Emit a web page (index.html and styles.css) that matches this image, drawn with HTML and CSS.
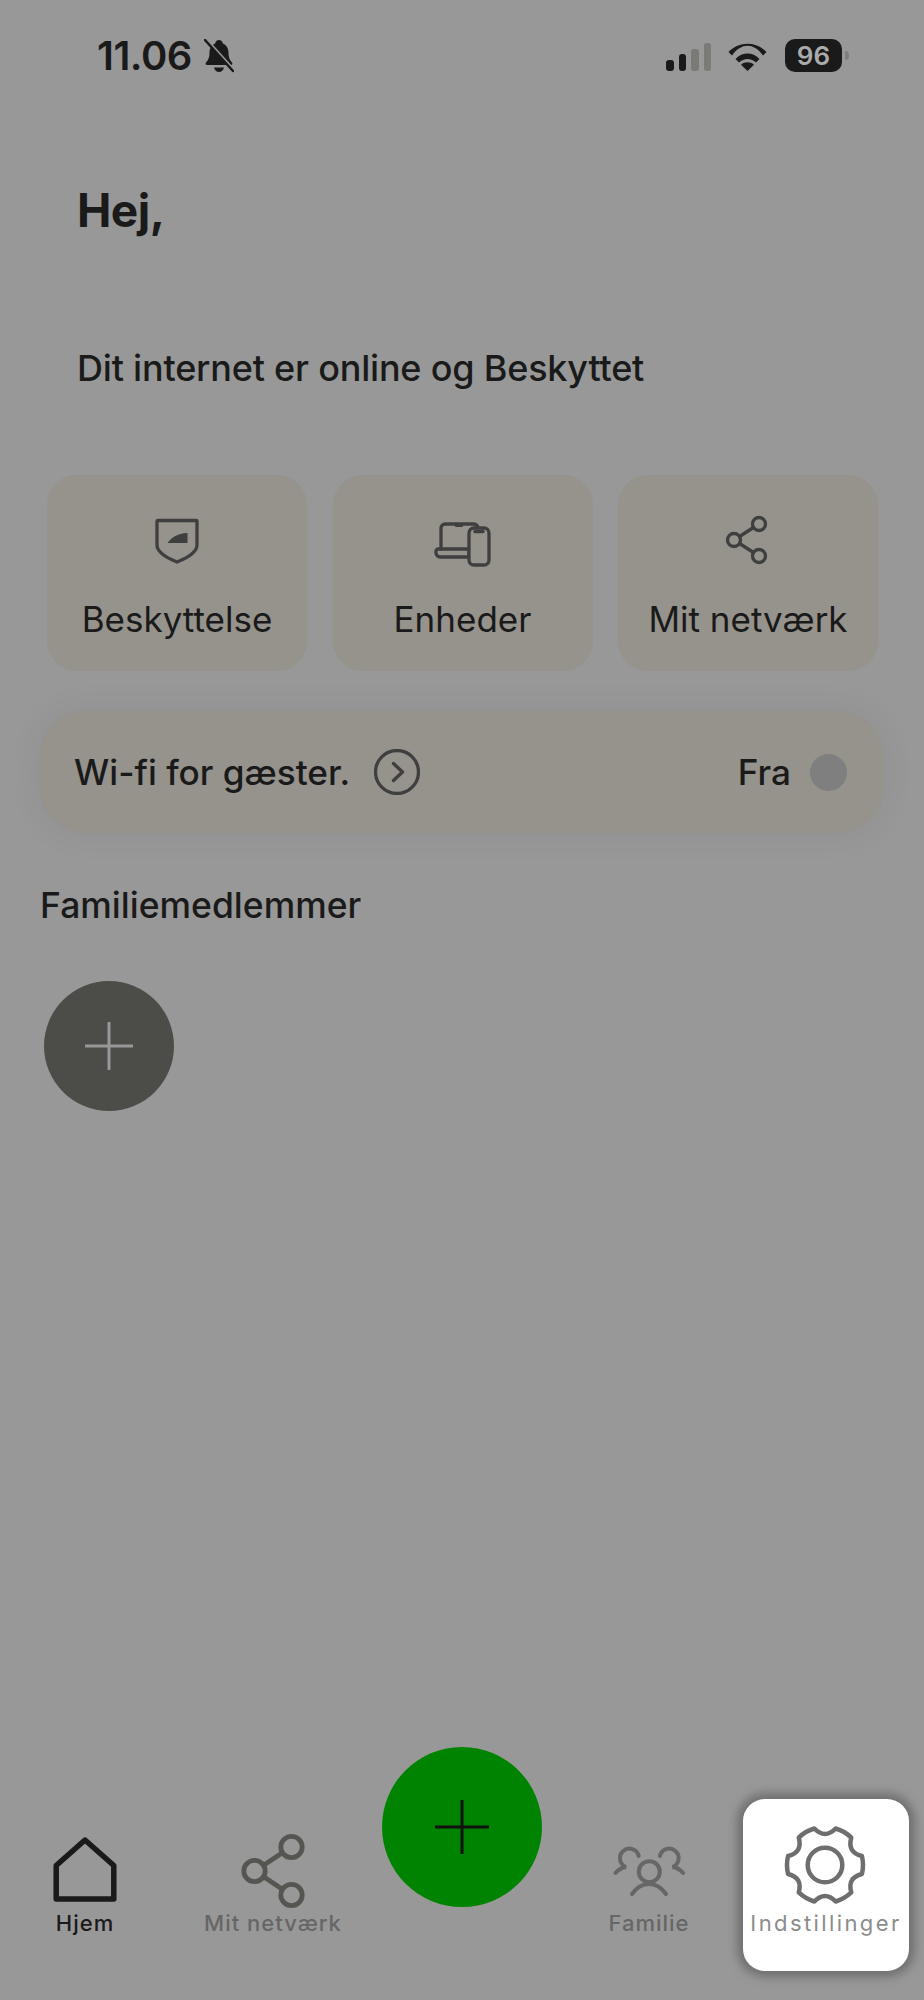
FILE: index.html
```html
<!DOCTYPE html>
<html lang="da">
<head>
<meta charset="utf-8">
<title>Hjem</title>
<link rel="stylesheet" href="styles.css">
</head>
<body>
<div class="page">
  <header class="status">
    <div class="status-left">
      <span class="time">11.06</span>
      <svg class="bell" width="30" height="34" viewBox="0 0 30 34"><path d="M15 1c2 0 3.500 1.500 3.800 3.500 4 1.500 5.700 5 5.700 9.500 0 4 1 7 3.500 9.500.8 1 .3 2.500-1 2.500H3c-1.300 0-1.800-1.500-1-2.500C4.500 21 5.500 18 5.500 14c0-4.500 1.700-8 5.700-9.500C11.500 2.500 13 1 15 1z" class="fill-dark"/><path d="M10 28.500h10c-.5 2.700-2.500 4.500-5 4.500s-4.500-1.800-5-4.500z" class="fill-dark"/><path d="M3 1l28 31" class="bell-gap"/><path d="M1 1l28 31" class="bell-slash"/></svg>
    </div>
    <div class="status-right">
      <div class="signal"><i class="bar b1"></i><i class="bar b2"></i><i class="bar b3 off"></i><i class="bar b4 off"></i></div>
      <svg class="wifi" width="39" height="28" viewBox="0 0 39 28"><path d="M.5 9C11-2 28-2 38.500 9l-3.500 3.600C26-.5 13-.5 4 12.600z" class="fill-dark"/><path d="M7.500 16c7-7.200 17-7.200 24 0l-3.500 3.600c-5-4.700-12-4.700-17 0z" class="fill-dark"/><path d="M19.500 28l-6.500-6.300c3.700-3.200 9.300-3.200 13 0z" class="fill-dark"/></svg>
      <div class="battery"><span class="battery-body">96</span><i class="battery-nub"></i></div>
    </div>
  </header>

  <h1 class="greeting">Hej,</h1>
  <p class="online">Dit internet er online og Beskyttet</p>

  <section class="cards">
    <div class="card">
      <svg class="card-icon" width="60" height="60" viewBox="0 0 60 60"><path d="M10 10.500c0-.6.400-1 1-1h38c.6 0 1 .4 1 1V34c0 6-7.500 12-20 17C17.500 46 10 40 10 34z" class="line"/><path d="M20.500 32c3-5 10-9.500 20-10V32z" class="fill-icon"/></svg>
      <span class="card-label">Beskyttelse</span>
    </div>
    <div class="card">
      <svg class="card-icon" width="60" height="60" viewBox="0 0 60 60"><path d="M8 38V17c0-2 2-4 4-4h29c2 0 4 2 4 4" class="line"/><path d="M21 13h10l-1.500 3h-7z" class="fill-icon"/><path d="M3 40c0-1 1-2 2-2h31v8H7c-2 0-4-2-4-4z" class="line"/><rect x="36" y="17" width="20" height="37" rx="5" class="card-phone"/><path d="M42 20.500h8" class="line"/></svg>
      <span class="card-label">Enheder</span>
    </div>
    <div class="card">
      <svg class="card-icon" width="60" height="60" viewBox="0 0 60 60"><circle cx="41" cy="13" r="6.500" class="line"/><circle cx="16" cy="29" r="6.500" class="line"/><circle cx="41" cy="45" r="6.500" class="line"/><path d="M21.500 25.500l14-9M21.500 32.500l14 9" class="line"/></svg>
      <span class="card-label">Mit netværk</span>
    </div>
  </section>

  <section class="guest">
    <div class="guest-left">
      <span class="guest-label">Wi-fi for gæster.</span>
      <svg width="46" height="46" viewBox="0 0 46 46"><circle cx="23" cy="23" r="21.500" class="line"/><path d="M19.500 14.500l9 8.500-9 8.500" class="line"/></svg>
    </div>
    <div class="guest-right">
      <span class="guest-label">Fra</span>
      <i class="toggle"></i>
    </div>
  </section>

  <h2 class="family-title">Familiemedlemmer</h2>
  <div class="family-add">
    <svg width="48" height="48" viewBox="0 0 48 48"><path d="M24 1v46M1 24h46" class="add-plus"/></svg>
  </div>

  <nav class="nav">
    <div class="nav-item home">
      <svg class="nav-icon" width="90" height="90" viewBox="0 0 90 90"><path d="M45 20L73.800 45.500V79H16.200V45.500z" class="home-line"/></svg>
      <span class="nav-label active">Hjem</span>
    </div>
    <div class="nav-item share">
      <svg class="nav-icon" width="90" height="90" viewBox="0 0 90 90"><circle cx="63.500" cy="27" r="10.700" class="share-line"/><circle cx="26.500" cy="51" r="10.700" class="share-line"/><circle cx="63.500" cy="75" r="10.700" class="share-line"/><path d="M36 45l18-12M36 57l18 12" class="share-line"/></svg>
      <span class="nav-label">Mit netværk</span>
    </div>
    <div class="fab">
      <svg width="56" height="56" viewBox="0 0 56 56"><path d="M28 1v54M1 28h54" class="fab-plus"/></svg>
    </div>
    <div class="nav-item family">
      <svg class="nav-icon" width="90" height="90" viewBox="0 0 90 90"><circle cx="45.300" cy="51.700" r="10.500" class="family-line"/><path d="M28 74c5-7 11-10 17-10s12 3 17 10" class="family-line"/><path d="M34.700 36A9.500 9.500 0 1 0 22 47c-4 .5-7.500 2.500-10.500 6" class="family-line"/><path d="M55.900 36A9.500 9.500 0 1 1 68.600 47c4 .5 7.500 2.500 10.500 6" class="family-line"/></svg>
      <span class="nav-label">Familie</span>
    </div>
    <div class="nav-item settings">
      <svg class="nav-icon" width="90" height="90" viewBox="0 0 90 90"><path d="M80.900 36A38 38 0 0 1 80.900 54Q66.100 57.750 70.260 72.470A38 38 0 0 1 54.670 81.470Q44 70.500 33.330 81.470A38 38 0 0 1 17.740 72.470Q21.900 57.750 7.080 54A38 38 0 0 1 7.080 36Q21.900 32.250 17.740 17.530A38 38 0 0 1 33.330 8.530Q44 19.500 54.670 8.530A38 38 0 0 1 70.260 17.530Q66.100 32.250 80.900 36Z" class="gear-line"/><circle cx="44" cy="45" r="17.300" class="gear-line"/></svg>
      <span class="nav-label">Indstillinger</span>
    </div>
  </nav>
</div>
</body>
</html>
```

FILE: styles.css
```css
* { box-sizing: border-box; }
html, body { margin: 0; padding: 0; }
body { background: #989898; font-family: Inter, "Liberation Sans", sans-serif; color: #1a1a1a; }
.page { width: 924px; height: 2000px; display: flex; flex-direction: column; overflow: hidden; }

.status { display: flex; justify-content: space-between; align-items: center; height: 33px; margin-top: 39px; padding: 0 75px 0 97px; }
.status-left { display: flex; align-items: center; gap: 12px; }
.time { font-size: 40px; font-weight: 600; line-height: 33px; letter-spacing: -0.5px; }
.status-right { display: flex; align-items: center; }
.signal { display: flex; align-items: flex-end; gap: 5px; height: 28px; margin-top: 3px; }
.bar { display: block; width: 7.500px; background: #1a1a1a; border-radius: 3px; }
.bar.off { background: #7a7a76; }
.b1 { height: 11px; }
.b2 { height: 17px; }
.b3 { height: 22px; }
.b4 { height: 28px; }
.wifi { margin: 3px 18px 0 17px; }
.battery { display: flex; align-items: center; gap: 3px; }
.battery-body { display: flex; align-items: center; justify-content: center; width: 57px; height: 33px; background: #1a1a1a; border-radius: 10px; color: #ababab; font-size: 26px; font-weight: 600; line-height: 1; }
.battery-nub { display: block; width: 4px; height: 9px; background: #7f7f7f; border-radius: 0 4px 4px 0; }

.fill-dark { fill: #1a1a1a; }
.bell-gap { fill: none; stroke: #989898; stroke-width: 2.500; }
.bell-slash { fill: none; stroke: #1a1a1a; stroke-width: 2.500; stroke-linecap: round; }

.greeting { margin: 114px 0 0 77px; font-size: 46px; font-weight: 700; line-height: 48px; letter-spacing: -0.5px; }
.online { margin: 114px 0 0 77px; font-size: 36px; font-weight: 500; line-height: 40px; letter-spacing: -0.2px; }

.cards { display: grid; grid-template-columns: repeat(3, 260px); column-gap: 25.500px; margin: 87px 0 0 47px; }
.card { height: 196px; border-radius: 30px; background: #96928c; display: flex; flex-direction: column; align-items: center; padding-top: 36px; }
.card-icon { display: block; }
.card-label { margin-top: 26px; font-size: 35px; line-height: 44px; }
.line { fill: none; stroke: #3f3f3f; stroke-width: 3.300; stroke-linecap: round; stroke-linejoin: round; }
.fill-icon { fill: #3f3f3f; }
.card-phone { fill: #96928c; stroke: #3f3f3f; stroke-width: 3.300; }

.guest { display: flex; justify-content: space-between; align-items: center; width: 843px; height: 122px; margin: 40px 0 0 40px; padding: 0 36px 0 34px; border-radius: 44px; background: #96928c; box-shadow: 0 0 36px rgba(0, 0, 0, .06); }
.guest-left { display: flex; align-items: center; gap: 24px; }
.guest-right { display: flex; align-items: center; gap: 19px; }
.guest-label { font-size: 35.200px; font-weight: 500; line-height: 44px; }
.toggle { display: block; width: 37px; height: 37px; border-radius: 50%; background: #7f7f7f; }

.family-title { margin: 53px 0 0 40px; font-size: 35.500px; font-weight: 500; line-height: 40px; }
.family-add { display: flex; align-items: center; justify-content: center; width: 130px; height: 130px; margin: 55px 0 0 44px; border-radius: 50%; background: #4c4d48; }
.add-plus { fill: none; stroke: #989898; stroke-width: 3; stroke-linecap: round; }

.nav { display: flex; align-items: flex-end; margin-top: auto; margin-bottom: 29px; }
.nav-item { display: flex; flex-direction: column; align-items: center; height: 172px; padding-top: 21px; }
.nav-icon { display: block; }
.nav-label { font-size: 22px; font-weight: 500; line-height: 26px; letter-spacing: 1px; color: #666; white-space: nowrap; }
.nav-label.active { color: #1a1a1a; }
.home { width: 170px; }
.share { width: 166px; margin-left: 20px; }
.fab { display: flex; align-items: center; justify-content: center; flex: none; width: 160px; height: 160px; margin: 0 0 64px 26px; border-radius: 50%; background: #008300; }
.fab-plus { fill: none; stroke: #111; stroke-width: 3; }
.family { width: 166px; margin-left: 24px; }
.settings { width: 166px; margin-left: 11px; background: #fff; border-radius: 22px; box-shadow: 0 0 10px 6px #707070; }
.settings .nav-label { color: #8c8c8c; letter-spacing: 2.400px; font-weight: 400; }
.home-line { fill: none; stroke: #1a1a1a; stroke-width: 5.500; stroke-linejoin: round; }
.share-line { fill: none; stroke: #555551; stroke-width: 4.800; }
.family-line { fill: none; stroke: #666; stroke-width: 4; stroke-linecap: round; }
.gear-line { fill: none; stroke: #6e6e6e; stroke-width: 4.500; stroke-linejoin: round; }
```
